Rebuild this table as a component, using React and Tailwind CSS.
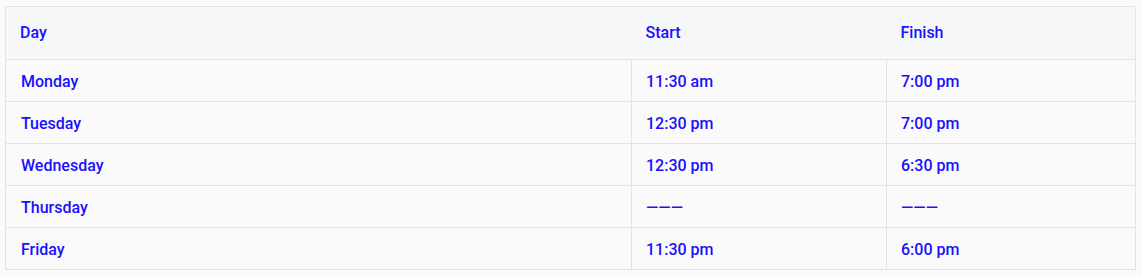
import React from "react";

const rows = [
  { day: "Monday", start: "11:30 am", finish: "7:00 pm" },
  { day: "Tuesday", start: "12:30 pm", finish: "7:00 pm" },
  { day: "Wednesday", start: "12:30 pm", finish: "6:30 pm" },
  { day: "Thursday", start: "———", finish: "———" },
  { day: "Friday", start: "11:30 pm", finish: "6:00 pm" },
];

export default function App() {
  return (
    <div
      className="w-[1142px] h-[277px] bg-[#fafafa] pl-[5px] pt-[6px]"
      style={{ fontFamily: "Roboto, 'Liberation Sans', sans-serif" }}
    >
      <table className="w-[1130px] border-collapse border border-[#e3e3e3] text-[16px] font-medium text-[#1a10ff] table-fixed">
        <colgroup>
          <col className="w-[626px]" />
          <col className="w-[255px]" />
          <col className="w-[249px]" />
        </colgroup>
        <thead>
          {/* Header */}
          <tr className="bg-[#f6f7f9] border-b border-[#e3e3e3]">
            <th className="h-[53px] pl-[14px] text-left font-medium">Day</th>
            <th className="h-[53px] pl-[14px] text-left font-medium">Start</th>
            <th className="h-[53px] pl-[14px] text-left font-medium">Finish</th>
          </tr>
        </thead>
        <tbody>
          {rows.map((r) => (
            <tr key={r.day} className="border-b border-[#e3e3e3]">
              <td className="h-[42px] pl-[15px] pt-[2px] border-r border-[#e3e3e3]">{r.day}</td>
              <td className="h-[42px] pl-[14px] pt-[2px] border-r border-[#e3e3e3]">{r.start}</td>
              <td className="h-[42px] pl-[14px] pt-[2px]">{r.finish}</td>
            </tr>
          ))}
        </tbody>
      </table>
    </div>
  );
}
